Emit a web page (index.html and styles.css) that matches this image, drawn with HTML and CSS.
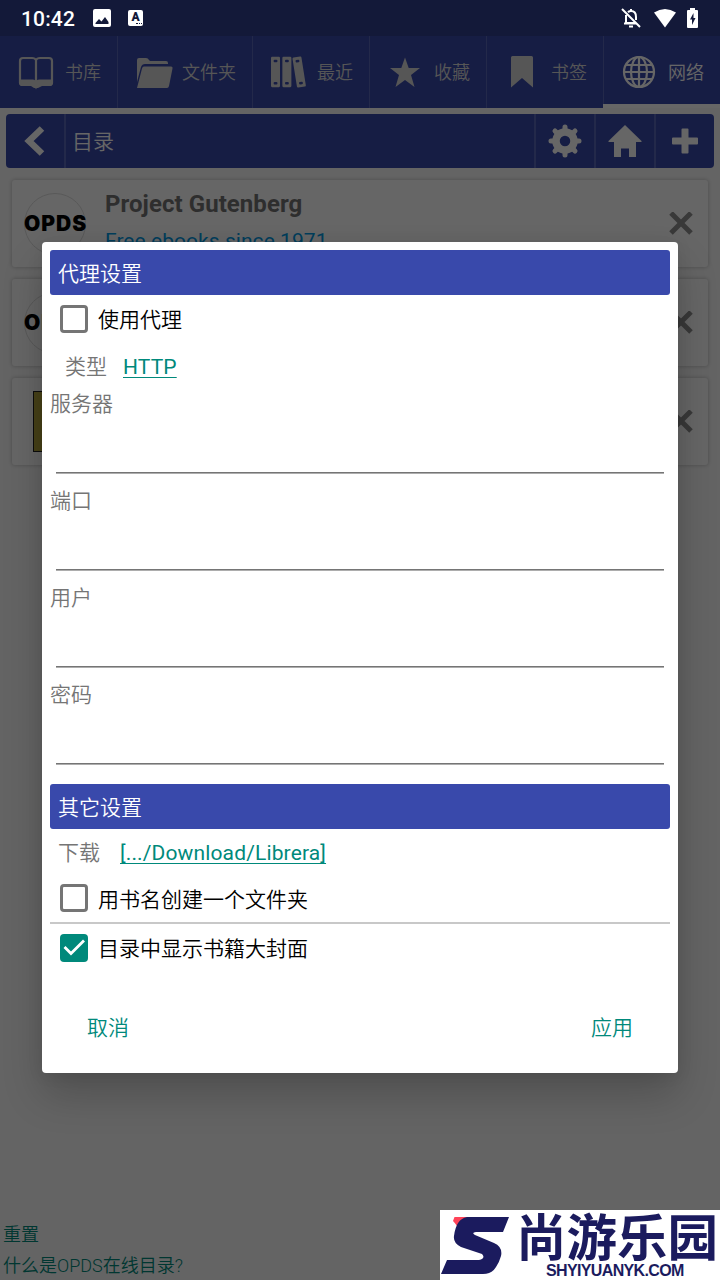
FILE: index.html
```html
<!DOCTYPE html>
<html lang="zh-CN">
<head>
<meta charset="utf-8">
<title>Librera</title>
<link rel="stylesheet" href="styles.css">
</head>
<body>
<div class="screen">
  <header class="status">
    <span class="clock">10:42</span>
    <svg class="st-image" width="18" height="18" viewBox="0 0 18 18"><path fill="#fff" fill-rule="evenodd" d="M2 0h14a2 2 0 0 1 2 2v14a2 2 0 0 1-2 2H2a2 2 0 0 1-2-2V2a2 2 0 0 1 2-2zM2.500 15h13v-2L12 8l-3.500 4.500L6 10l-3.500 4z"/></svg>
    <span class="st-lang">A<i></i></span>
    <svg class="st-bell" width="20" height="20" viewBox="0 0 20 20" fill="none" stroke="#fff" stroke-width="2"><path d="M7 4.200Q8.200 3 10 3q5 0 5 6v3M5 7v8h9M3 15.500h13M10 1v2M1 1l18 18"/><path d="M8 18.500h4"/></svg>
    <svg class="st-wifi" width="22" height="19" viewBox="0 0 22 19"><path fill="#fff" d="M0 3.500Q11-3.500 22 3.500L11 18.500z"/></svg>
    <svg class="st-batt" width="11" height="20" viewBox="0 0 11 20"><path fill="#fff" fill-rule="evenodd" d="M3 0h5v2h2a1 1 0 0 1 1 1v16a1 1 0 0 1-1 1H1a1 1 0 0 1-1-1V3a1 1 0 0 1 1-1h2zM6.500 5L3 11.500h2V17l3.500-7H6.500z"/></svg>
  </header>

  <nav class="tabs">
    <div class="tab first"><svg width="36" height="36" viewBox="0 0 36 36"><path fill="none" stroke="currentColor" stroke-width="2.200" d="M18 6Q17 4 14 4H5Q2 4 2 7v22q0 2 3 2h9q3 0 4 2 1-2 4-2h9q3 0 3-2V7q0-3-3-3h-9q-3 0-4 2v23"/><path fill="currentColor" d="M1 25.500h14q2 0 3 2 1-2 3-2h14v4l-2 2.500h-9L20 34h-4l-3-2H3l-2-2.500z"/></svg><span>书库</span></div>
    <div class="tab"><svg width="36" height="36" viewBox="0 0 36 36" fill="currentColor"><path d="M1 28V6q0-2 2-2h7q2 0 3 2l1 1h16q2 0 2 2v1H9q-3 0-4 3z"/><path d="M8 12.500h27q2 0 1.500 2L33 32q-.5 2-2 2H1l5-19.500q.5-2 2-2z"/></svg><span>文件夹</span></div>
    <div class="tab"><svg width="38" height="36" viewBox="0 0 38 36"><g fill="currentColor"><rect y="2" width="9.500" height="32" rx="1.200"/><rect x="12" y="2" width="9.500" height="32" rx="1.200"/><rect x="25" y="2" width="9.500" height="32" rx="1.200" transform="rotate(-9 30 18)"/></g><g class="hole"><rect x="2.800" y="5" width="4" height="2.600" rx="1"/><rect x="2.800" y="28.500" width="4" height="2.600" rx="1"/><rect x="14.800" y="5" width="4" height="2.600" rx="1"/><rect x="14.800" y="28.500" width="4" height="2.600" rx="1"/><g transform="rotate(-9 30 18)"><rect x="27.800" y="5" width="4" height="2.600" rx="1"/><rect x="27.800" y="28.500" width="4" height="2.600" rx="1"/></g></g></svg><span>最近</span></div>
    <div class="tab"><svg width="36" height="36" viewBox="0 0 36 36"><path fill="currentColor" d="M17 3.500l3.700 10.500H32l-9 7 3.500 12L17 26l-9.500 7L11 21l-9-7h11.300z"/></svg><span>收藏</span></div>
    <div class="tab"><svg width="36" height="36" viewBox="0 0 36 36"><path fill="currentColor" d="M7.500 2h19a1.500 1.500 0 0 1 1.500 1.500V33.500L17 24 6 33.500V3.500A1.500 1.500 0 0 1 7.500 2z"/></svg><span>书签</span></div>
    <div class="tab active"><svg width="36" height="36" viewBox="0 0 36 36" fill="none" stroke="currentColor" stroke-width="2.200"><circle cx="17" cy="18" r="15"/><ellipse cx="17" cy="18" rx="8" ry="15"/><path d="M17 3v30M2 18h30M4 11h26M4 25h26"/></svg><span>网络</span></div>
  </nav>

  <div class="toolbar">
    <span class="tool back"><svg width="36" height="36" viewBox="0 0 36 36"><path fill="none" stroke="currentColor" stroke-width="6.500" d="M27 5.500L14 18l13 12.500"/></svg></span>
    <span class="title">目录</span>
    <span class="tool"><svg width="36" height="36" viewBox="0 0 36 36"><g fill="none" stroke="currentColor"><circle cx="18" cy="18" r="9" stroke-width="7.500"/><path stroke-width="5" stroke-linecap="round" d="M18 4v4M18 28v4M4 18h4M28 18h4M8 8l3 3M25 25l3 3M28 8l-3 3M11 25l-3 3"/></g></svg></span>
    <span class="tool"><svg width="36" height="36" viewBox="0 0 36 36"><path fill="currentColor" d="M18 2l16.500 16v1h-5.500v15h-7v-8.500h-8V34H7V19H1.500v-1z"/></svg></span>
    <span class="tool"><svg width="36" height="36" viewBox="0 0 36 36"><path fill="currentColor" d="M15.500 5.500h5q1 0 1 1v8H30q1 0 1 1v5q0 1-1 1h-8.500v8q0 1-1 1h-5q-1 0-1-1v-8H6q-1 0-1-1v-5q0-1 1-1h8.500v-8q0-1 1-1z"/></svg></span>
  </div>

  <main class="cards">
    <article class="card">
      <div class="logo">OPDS</div>
      <div class="info"><h2>Project Gutenberg</h2><p>Free ebooks since 1971</p></div>
      <svg class="close" width="24" height="24" viewBox="0 0 24 24"><path d="M2 1l20 20M22 1L2 21"/></svg>
    </article>
    <article class="card">
      <div class="logo">OPDS</div>
      <div class="info"></div>
      <svg class="close" width="24" height="24" viewBox="0 0 24 24"><path d="M2 1l20 20M22 1L2 21"/></svg>
    </article>
    <article class="card">
      <div class="cover"></div>
      <div class="info"></div>
      <svg class="close" width="24" height="24" viewBox="0 0 24 24"><path d="M2 1l20 20M22 1L2 21"/></svg>
    </article>
  </main>

  <footer class="links"><a>重置</a><a>什么是OPDS在线目录?</a></footer>

  <div class="scrim">
    <section class="dialog">
      <h3>代理设置</h3>
      <label class="check"><span class="box"></span><span class="label">使用代理</span></label>
      <div class="option type"><span>类型</span><a>HTTP</a></div>
      <div class="field"><span>服务器</span><div class="line"></div></div>
      <div class="field"><span>端口</span><div class="line"></div></div>
      <div class="field"><span>用户</span><div class="line"></div></div>
      <div class="field"><span>密码</span><div class="line"></div></div>
      <h3 class="other">其它设置</h3>
      <div class="option download"><span>下载</span><a>[.../Download/Librera]</a></div>
      <label class="check folder"><span class="box"></span><span class="label">用书名创建一个文件夹</span></label>
      <label class="check"><span class="box on"><svg width="28" height="28" viewBox="0 0 28 28"><path fill="none" stroke="#fff" stroke-width="2.800" d="M4.500 13l6.500 6.500L24 6.500"/></svg></span><span class="label">目录中显示书籍大封面</span></label>
      <div class="actions"><span>取消</span><span>应用</span></div>
    </section>
  </div>

  <aside class="watermark">
    <svg width="72" height="70" viewBox="0 0 72 70"><path fill="#ff4358" d="M14.500 7H28L17 16q-2-3-4-5z"/><path fill="#1b1b5e" d="M27 7h42l-6 15H36q-5 .5-1 3l19 8q9 4 7 13-2 7-5 11-4 7-13 7H1l6-14h32q7-2 3-6L21 37q-8-4-7-11Q16 9 27 7z"/></svg>
    <div class="brand"><b>尚游乐园</b><span>SHYIYUANYK.COM</span></div>
  </aside>
</div>
</body>
</html>
```
FILE: styles.css
```css
* { box-sizing: border-box; }

body {
  margin: 0;
  font-family: Roboto, "Noto Sans CJK SC", sans-serif;
}

.screen {
  position: relative;
  width: 720px;
  height: 1280px;
  overflow: hidden;
  display: flex;
  flex-direction: column;
  background: #fafafa;
}

svg { display: block; flex: none; }

.status {
  position: relative;
  z-index: 2;
  height: 36px;
  flex: none;
  display: flex;
  align-items: center;
  padding: 0 22px 0 21px;
  background: #131939;
  color: #fff;
}

.clock { width: 72px; font-size: 21px; font-weight: 500; line-height: 36px; padding-top: 2px; letter-spacing: .15px; }

.st-lang {
  display: flex;
  flex-direction: column;
  align-items: center;
  width: 15px;
  height: 16px;
  margin-left: 17px;
  border-radius: 2px;
  background: #fff;
  color: #131939;
  font-size: 12px;
  font-weight: 900;
  line-height: 14px;
}

.st-lang i { width: 6px; margin: -1px 0 0 6px; border-top: 1px dotted #131939; }
.st-bell { margin-left: auto; }
.st-wifi { margin: 0 11px 0 13px; }

.tabs {
  display: flex;
  height: 72px;
  flex: none;
  background: #3949ab;
  color: #d7d7d7;
  font-size: 18px;
  font-weight: 350;
}

.tab {
  display: flex;
  align-items: center;
  flex: none;
  gap: 10px;
  padding: 0 16px 0 18px;
  border-right: 1px solid #5967b8;
}

.tab.first { gap: 11px; }
.tab svg { width: 36px; overflow: visible; }
.tab span { line-height: 26px; padding-top: 2px; white-space: nowrap; }
.hole { fill: #3949ab; }

.tab.active {
  flex: 1;
  height: 72px;
  margin-left: -1px;
  border-bottom: 4px solid #fff;
  border-right: 0;
  color: #fff;
  padding: 4px 0 0 19px;
}

.toolbar {
  display: flex;
  height: 54px;
  flex: none;
  margin: 6px;
  border-radius: 4px;
  background: #3949ab;
  color: #fff;
}

.tool {
  width: 60px;
  padding-right: 1px;
  border-left: 2px solid #5967b8;
  display: grid;
  place-items: center;
}

.tool.back { border-left: 0; border-right: 2px solid #5967b8; padding-right: 4px; }

.title { flex: 1; padding-left: 6px; font-size: 21px; font-weight: 350; line-height: 57px; }

.cards { display: grid; gap: 12px; padding: 6px 12px; }

.card {
  display: flex;
  align-items: center;
  height: 87px;
  padding: 0 15px 0 12px;
  border-radius: 3px;
  background: #fff;
  box-shadow: 0 0 4px rgba(0, 0, 0, .25);
}

.logo {
  display: flex;
  justify-content: center;
  align-items: center;
  width: 62px;
  height: 62px;
  border: 1px solid #dedede;
  border-radius: 50%;
  color: #000;
  font: 900 21px Inter, sans-serif;
  letter-spacing: 1px;
  text-indent: 1px;
}

.cover {
  width: 44px;
  height: 61px;
  margin: 0 9px;
  border: 1px solid #222;
  background: #b5a63c;
}

.info { flex: 1; padding-left: 19px; align-self: stretch; }
.info h2 { margin: 9px 0 0; font-size: 24px; line-height: 30px; font-weight: 700; color: #747474; letter-spacing: .06px; }
.info p { margin: 8px 0 0; font-size: 21px; line-height: 28px; color: #039be5; letter-spacing: .05px; }
.close { fill: none; stroke: #909090; stroke-width: 5; }

.links {
  display: flex;
  flex-direction: column;
  height: 61px;
  margin-top: auto;
  padding-left: 3px;
  color: #00897b;
  font-size: 18px;
  font-weight: 350;
  line-height: 31px;
}

.scrim {
  position: absolute;
  inset: 0;
  z-index: 1;
  padding: 242px 42px 0;
  background: rgba(0, 0, 0, .6);
}

.dialog {
  height: 831px;
  padding: 8px;
  border-radius: 4px;
  background: #fff;
  box-shadow: 0 22px 40px rgba(0, 0, 0, .2), 0 2px 16px rgba(0, 0, 0, .08);
  color: #000;
  font-size: 21px;
  font-weight: 350;
}

.dialog h3 {
  height: 45px;
  margin: 0;
  padding-left: 8px;
  border-radius: 3px;
  background: #3949ab;
  color: #fff;
  font-size: 21px;
  font-weight: 350;
  line-height: 49px;
}

.dialog .other { margin-top: 6px; }

.check { display: flex; align-items: center; height: 48px; padding-left: 10px; gap: 10px; }
.label { padding-bottom: 2px; }
.box { width: 28px; height: 28px; border: 3px solid #757575; border-radius: 4px; }
.box.on { border: 0; background: #00897b; }
.folder { height: 49px; padding-bottom: 2px; border-bottom: 2px solid #c8c8c8; }
.folder .label { padding-bottom: 0; }

.option { display: flex; align-items: center; height: 47px; color: #757575; }
.option span { padding-bottom: 3px; }
.option a {
  color: #00897b;
  font-weight: 400;
  letter-spacing: .14px;
  text-decoration: underline;
  text-decoration-thickness: 1px;
  text-underline-offset: 3px;
}
.type { padding-left: 15px; gap: 16px; }
.download { height: 46px; padding: 2px 0 0 8px; gap: 20px; }
.download span { padding-bottom: 5px; }

.field { height: 97px; color: #757575; }
.field span { display: block; height: 28px; line-height: 28px; }
.line { height: 55px; margin: 0 6px; border-bottom: 1px solid #757575; box-shadow: 0 1px #adadad; }

.actions {
  display: flex;
  justify-content: space-between;
  padding: 40px 37px 0;
  color: #00897b;
  line-height: 32px;
}

.watermark {
  position: absolute;
  z-index: 3;
  right: 0;
  bottom: 0;
  display: flex;
  width: 280px;
  height: 70px;
  background: #fff;
  color: #1b1b5e;
}

.brand { flex: 1; padding-left: 4px; }
.brand b { display: block; height: 51px; font: 700 50.500px/49px "Noto Sans CJK SC", sans-serif; white-space: nowrap; }
.brand span { display: block; padding-left: 30px; font: 700 16px/20px "Liberation Sans", sans-serif; letter-spacing: -.64px; }
```
